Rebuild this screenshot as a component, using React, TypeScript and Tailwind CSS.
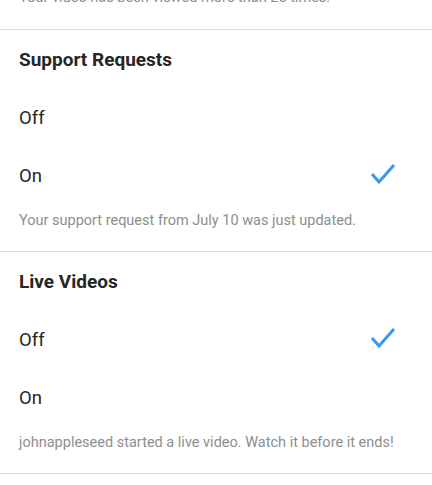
const sections = [
  {
    title: "Support Requests",
    selected: "On",
    note: "Your support request from July 10 was just updated.",
  },
  {
    title: "Live Videos",
    selected: "Off",
    note: "johnappleseed started a live video. Watch it before it ends!",
  },
];

function Check() {
  return (
    <svg width="26" height="22" viewBox="0 0 26 22" fill="none">
      <polyline
        points="2,11 9,19 24,2"
        stroke="#3897f0"
        strokeWidth="3"
        strokeLinejoin="miter"
      />
    </svg>
  );
}

export default function App() {
  return (
    <div className="h-[485px] w-[432px] overflow-hidden bg-white font-['Roboto',sans-serif] text-[#262626]">
      <div className="pb-[21px] pl-[19px]">
        <p className="-mt-[12px] text-[14.5px] leading-[20px] text-[#8e8e8e]">
          Your video has been viewed more than 25 times.
        </p>
      </div>
      {sections.map((s) => (
        <section key={s.title} className="border-t border-[#dbdbdb]">
          <div className="flex h-[60px] items-center pl-[19px] pt-[1px] text-[19px] font-bold">
            {s.title}
          </div>
          {["Off", "On"].map((opt) => (
            <div key={opt} className="flex h-[58px] items-center justify-between pl-[19px] pr-[36px] text-[18.5px]">
              <span>{opt}</span>
              {s.selected === opt && (
                <span className="-mt-[6px]">
                  <Check />
                </span>
              )}
            </div>
          ))}
          <p className="pb-[20px] pl-[19px] pt-[5px] text-[14.5px] leading-[20px] text-[#8e8e8e]">
            {s.note}
          </p>
        </section>
      ))}
      <div className="border-t border-[#dbdbdb]" />
    </div>
  );
}
